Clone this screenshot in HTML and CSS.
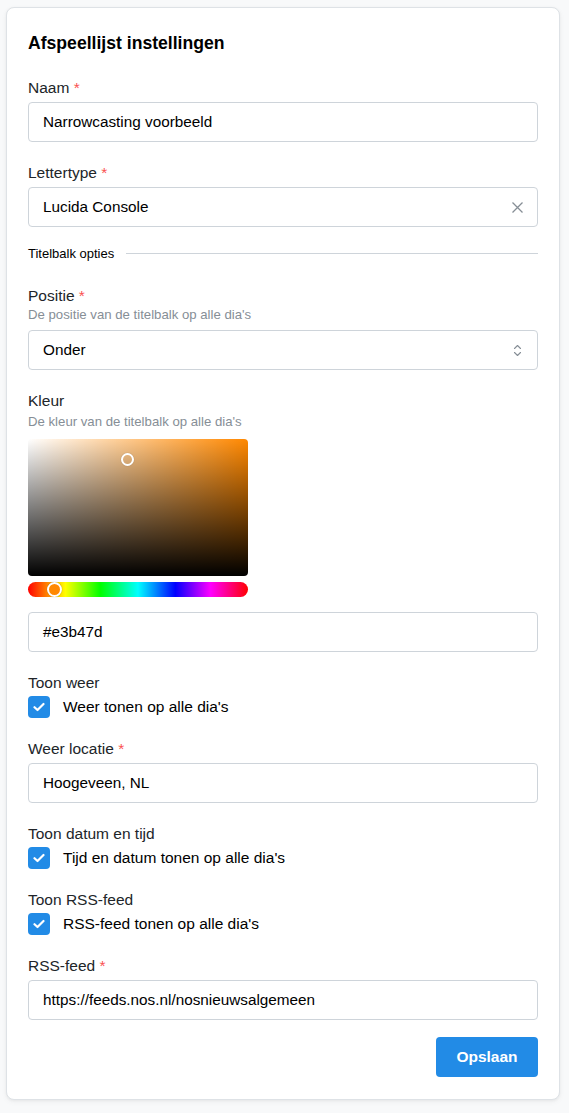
FILE: index.html
```html
<!DOCTYPE html>
<html lang="nl">
<head>
<meta charset="utf-8">
<title>Afspeellijst instellingen</title>
<link rel="stylesheet" href="styles.css">
</head>
<body>
<div class="card">
  <h2 class="title">Afspeellijst instellingen</h2>

  <div class="field">
    <label class="label">Naam <span class="req">*</span></label>
    <div class="input"><span>Narrowcasting voorbeeld</span></div>
  </div>

  <div class="field">
    <label class="label">Lettertype <span class="req">*</span></label>
    <div class="input">
      <span>Lucida Console</span>
      <svg class="icon" width="15" height="15" viewBox="0 0 15 15"><path d="M2.5 2.5L12.5 12.5M12.5 2.5L2.5 12.5" stroke="#868e96" stroke-width="1.3" fill="none"/></svg>
    </div>
  </div>

  <div class="divider"><span>Titelbalk opties</span><div class="line"></div></div>

  <div class="field">
    <label class="label">Positie <span class="req">*</span></label>
    <div class="desc">De positie van de titelbalk op alle dia's</div>
    <div class="input">
      <span>Onder</span>
      <svg class="icon" width="15" height="15" viewBox="0 0 15 15"><path d="M4.5 5.5L7.5 2.5L10.5 5.5M4.5 9.5L7.5 12.5L10.5 9.5" stroke="#868e96" stroke-width="1.1" fill="none" stroke-linecap="round" stroke-linejoin="round"/></svg>
    </div>
  </div>

  <div class="field">
    <label class="label">Kleur</label>
    <div class="desc desc-kleur">De kleur van de titelbalk op alle dia's</div>
    <div class="picker">
      <div class="saturation"><div class="sat-thumb"></div></div>
      <div class="hue"><div class="hue-thumb"></div></div>
    </div>
    <div class="input hex"><span>#e3b47d</span></div>
  </div>

  <div class="field">
    <label class="label">Toon weer</label>
    <div class="check-row">
      <span class="checkbox"><svg width="12" height="10" viewBox="0 0 12 10"><path d="M1.5 5.2L4.5 8L10.5 2" stroke="#fff" stroke-width="2.2" fill="none" stroke-linecap="round" stroke-linejoin="round"/></svg></span>
      <span class="check-label">Weer tonen op alle dia's</span>
    </div>
  </div>

  <div class="field">
    <label class="label">Weer locatie <span class="req">*</span></label>
    <div class="input"><span>Hoogeveen, NL</span></div>
  </div>

  <div class="field">
    <label class="label">Toon datum en tijd</label>
    <div class="check-row">
      <span class="checkbox"><svg width="12" height="10" viewBox="0 0 12 10"><path d="M1.5 5.2L4.5 8L10.5 2" stroke="#fff" stroke-width="2.2" fill="none" stroke-linecap="round" stroke-linejoin="round"/></svg></span>
      <span class="check-label">Tijd en datum tonen op alle dia's</span>
    </div>
  </div>

  <div class="field">
    <label class="label">Toon RSS-feed</label>
    <div class="check-row">
      <span class="checkbox"><svg width="12" height="10" viewBox="0 0 12 10"><path d="M1.5 5.2L4.5 8L10.5 2" stroke="#fff" stroke-width="2.2" fill="none" stroke-linecap="round" stroke-linejoin="round"/></svg></span>
      <span class="check-label">RSS-feed tonen op alle dia's</span>
    </div>
  </div>

  <div class="field last">
    <label class="label">RSS-feed <span class="req">*</span></label>
    <div class="input"><span>https://feeds.nos.nl/nosnieuwsalgemeen</span></div>
  </div>

  <div class="actions">
    <button class="btn">Opslaan</button>
  </div>
</div>
</body>
</html>
```

FILE: styles.css
```css
* { box-sizing: border-box; }

body {
  margin: 0;
  padding: 7px 9px 12px 6px;
  background: #f8f9fa;
  font-family: "Liberation Sans", Arial, sans-serif;
  color: #212529;
}

.card {
  width: 554px;
  background: #fff;
  border: 1px solid #dee2e6;
  border-radius: 8px;
  box-shadow: 0 1px 3px rgba(0,0,0,0.05), 0 2px 6px rgba(0,0,0,0.04);
  padding: 21px 21px 22px 21px;
  display: flex;
  flex-direction: column;
}

.title {
  margin: 0 0 20px;
  font-size: 17.6px;
  line-height: 28px;
  font-weight: 700;
  color: #000;
}

.field {
  display: flex;
  flex-direction: column;
  margin-bottom: 20px;
}

.field.last { margin-bottom: 17px; }

.label {
  font-size: 15.5px;
  line-height: 21px;
  margin-bottom: 4px;
  color: #212529;
}

.req { color: #fa5252; }

.desc {
  font-size: 13.2px;
  line-height: 18px;
  color: #868e96;
  margin-top: -4px;
  margin-bottom: 6px;
}

.desc.desc-kleur {
  margin-top: -2px;
  margin-bottom: 8px;
}

.input {
  height: 40px;
  border: 1px solid #ced4da;
  border-radius: 4px;
  padding: 0 14px;
  display: flex;
  align-items: center;
  justify-content: space-between;
  font-size: 15.3px;
  color: #000;
}

.icon { margin-right: -2px; }

.divider {
  display: flex;
  align-items: center;
  gap: 12px;
  height: 20px;
  margin-top: -4px;
  margin-bottom: 22px;
  font-size: 13px;
  color: #000;
}

.divider .line {
  flex: 1;
  height: 1px;
  background: #ced4da;
}

.picker {
  width: 220px;
  display: flex;
  flex-direction: column;
  gap: 6px;
  margin-bottom: 15px;
}

.saturation {
  position: relative;
  height: 137px;
  border-radius: 4px;
  background:
    linear-gradient(to top, #000, rgba(0,0,0,0)),
    linear-gradient(to right, #fff, rgba(255,255,255,0)),
    hsl(32, 100%, 50%);
}

.sat-thumb {
  position: absolute;
  left: 93px;
  top: 14px;
  width: 13px;
  height: 13px;
  border: 2px solid #fff;
  border-radius: 50%;
  box-shadow: 0 0 1px rgba(0,0,0,0.4);
}

.hue {
  position: relative;
  height: 15px;
  border-radius: 8px;
  background: linear-gradient(to right, #f00 0%, #ff0 17%, #0f0 33%, #0ff 50%, #00f 67%, #f0f 83%, #f00 100%);
}

.hue-thumb {
  position: absolute;
  left: 19px;
  top: 0px;
  width: 15px;
  height: 15px;
  border: 2px solid #fff;
  border-radius: 50%;
  background: #ff8800;
  box-shadow: 0 0 1px rgba(0,0,0,0.4);
}

.check-row {
  display: flex;
  align-items: center;
  gap: 13px;
  margin-top: -1px;
}

.checkbox {
  width: 22px;
  height: 22px;
  border-radius: 4px;
  background: #228be6;
  display: flex;
  align-items: center;
  justify-content: center;
}

.check-label {
  font-size: 15.5px;
  color: #000;
}

.actions {
  display: flex;
  justify-content: flex-end;
}

.btn {
  height: 40px;
  width: 102px;
  border: 0;
  border-radius: 4px;
  background: #228be6;
  color: #fff;
  font-family: "Liberation Sans", Arial, sans-serif;
  font-size: 15.5px;
  font-weight: 700;
}
```
